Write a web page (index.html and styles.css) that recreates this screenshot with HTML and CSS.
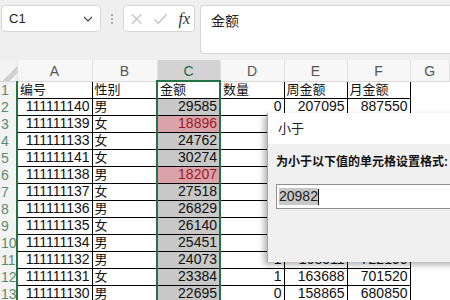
FILE: index.html
```html
<!DOCTYPE html>
<html lang="zh-CN">
<head>
    <meta charset="UTF-8">
    <title>条件格式 - 小于</title>
    <link rel="stylesheet" href="styles.css">
</head>
<body>
    <div class="toolbar">
        <div class="namebox">
            <span>C1</span>
            <svg class="chevron" width="10" height="6" viewBox="0 0 10 6"><path d="M1 1l4 4 4-4" fill="none" stroke="#444" stroke-width="1.2"/></svg>
        </div>
        <div class="dots">
            <svg width="4" height="12" viewBox="0 0 4 12"><circle cx="2" cy="2" r="1" fill="#999"/><circle cx="2" cy="6" r="1" fill="#999"/><circle cx="2" cy="10" r="1" fill="#999"/></svg>
        </div>
        <div class="fxbox">
            <svg width="14" height="14" viewBox="0 0 14 14"><path d="M2 2l10 10M12 2L2 12" stroke="#c4c4c4" stroke-width="1.3"/></svg>
            <svg width="16" height="14" viewBox="0 0 16 14"><path d="M1.5 7.5l4 4L14.5 2" fill="none" stroke="#c4c4c4" stroke-width="1.3"/></svg>
            <span class="fx">fx</span>
        </div>
        <div class="formula">金额</div>
    </div>

    <table class="sheet">
        <colgroup>
            <col class="w-rh"><col class="w-a"><col class="w-b"><col class="w-c"><col class="w-d"><col class="w-e"><col class="w-f"><col>
        </colgroup>
        <thead>
            <tr>
                <th class="corner"></th>
                <th>A</th><th>B</th><th class="sel-col">C</th><th>D</th><th>E</th><th>F</th><th>G</th>
            </tr>
        </thead>
        <tbody id="rows"></tbody>
    </table>

    <div class="dialog">
        <div class="dialog-title">小于</div>
        <div class="dialog-body">
            <div class="prompt">为小于以下值的单元格设置格式:</div>
            <div class="input"><span class="picked">20982</span><span class="caret"></span></div>
        </div>
    </div>

    <script>
        // rows: id, sex, amount, qty, week, month (blank where the dialog covers them)
        const data = [
            ['编号', '性别', '金额', '数量', '周金额', '月金额'],
            ['111111140', '男', '29585', '0', '207095', '887550'],
            ['111111139', '女', '18896', '', '', ''],
            ['111111133', '女', '24762', '', '', ''],
            ['111111141', '女', '30274', '', '', ''],
            ['111111138', '男', '18207', '', '', ''],
            ['111111137', '女', '27518', '', '', ''],
            ['111111136', '男', '26829', '', '', ''],
            ['111111135', '女', '26140', '', '', ''],
            ['111111134', '男', '25451', '', '', ''],
            ['111111132', '男', '24073', '1', '168511', '722190'],
            ['111111131', '女', '23384', '1', '163688', '701520'],
            ['111111130', '男', '22695', '0', '158865', '680850']
        ];
        const limit = 20982;
        const body = document.getElementById('rows');

        data.forEach((row, i) => {
            const tr = document.createElement('tr');
            let html = '<th class="rh">' + (i + 1) + '</th>';
            row.forEach((v, j) => {
                let cls = 'cell';
                if (i > 0 && j !== 1) cls += ' num';
                if (j === 2) {
                    cls += ' sel';
                    if (i > 0) cls += Number(v) < limit ? ' low' : ' grey';
                    if (i === 0) cls += ' sel-top';
                    if (i === data.length - 1) cls += ' sel-bottom';
                }
                html += '<td class="' + cls + '">' + v + '</td>';
            });
            html += '<td class="blank"></td>';
            tr.innerHTML = html;
            body.appendChild(tr);
        });
    </script>
</body>
</html>
```

FILE: styles.css
```css
body {
    margin: 0;
    width: 450px;
    height: 300px;
    overflow: hidden;
    position: relative;
    background: #fff;
    font-family: "Liberation Sans", "Noto Sans CJK SC", sans-serif;
    font-size: 13px;
    color: #111;
}

.toolbar {
    height: 60px;
    background: #efefef;
    display: flex;
    align-items: flex-start;
    padding: 5px 0 0 1px;
    box-sizing: border-box;
}
.namebox {
    width: 100px;
    height: 27px;
    background: #fff;
    border: 1px solid #d6d6d6;
    border-radius: 4px;
    box-sizing: border-box;
    display: flex;
    align-items: center;
    justify-content: space-between;
    padding: 0 7px 0 7px;
    font-size: 13px;
    color: #222;
}
.dots {
    width: 22px;
    height: 27px;
    display: flex;
    align-items: center;
    justify-content: center;
}
.fxbox {
    width: 72px;
    height: 27px;
    background: #fff;
    border: 1px solid #d6d6d6;
    border-radius: 4px;
    box-sizing: border-box;
    display: flex;
    align-items: center;
    gap: 10px;
    padding: 0 4px 0 6px;
}
.fx {
    font-family: "Liberation Serif", serif;
    font-style: italic;
    font-size: 16px;
    color: #333;
}
.formula {
    flex: 1;
    height: 49px;
    margin-left: 5px;
    background: #fff;
    border: 1px solid #d6d6d6;
    border-right: none;
    border-radius: 4px 0 0 4px;
    box-sizing: border-box;
    padding: 4px 10px;
    font-size: 14px;
    color: #222;
}

.sheet {
    border-collapse: collapse;
    table-layout: fixed;
    width: 450px;
}
.w-rh { width: 17px; }
.w-a { width: 75px; }
.w-b { width: 65px; }
.w-c { width: 63px; }
.w-d { width: 64px; }
.w-e { width: 63px; }
.w-f { width: 63px; }

.sheet thead th {
    height: 18px;
    padding: 2px 0 0;
    font-weight: normal;
    font-size: 14px;
    color: #555;
    background: #f7f7f7;
    border-right: 1px solid #e2e2e2;
    border-bottom: 1px solid #d8d8d8;
    text-align: center;
    line-height: 16px;
}
.sheet thead th.corner {
    background: #f3f3f3 linear-gradient(135deg, transparent 62%, #d0d0d0 63%, #d0d0d0 80%, transparent 81%);
}
.sheet thead th.sel-col {
    background: #d3d3d3;
    color: #1f6b42;
    border-bottom: 2px solid #217346;
}

.sheet tbody tr { height: 17px; }
.rh {
    padding: 0 0 0 1px;
    font-weight: normal;
    font-size: 14px;
    color: #5d8b70;
    background: #f3f3f3;
    text-align: left;
    border-right: 2px solid #217346;
    line-height: 16px;
}
.cell {
    padding: 0 2px;
    border: 1px solid #000;
    white-space: nowrap;
    overflow: hidden;
    line-height: 15px;
}
.cell.num {
    text-align: right;
    font-size: 14px;
}
.cell.grey { background: #c8c8c8; }
.cell.low {
    background: #d9a3a9;
    color: #9c1a26;
}
.cell.sel {
    border-left: 2px solid #217346;
    border-right: 2px solid #217346;
}
.cell.sel-top { border-top: 2px solid #217346; }
.cell.sel-bottom { border-bottom: 2px solid #217346; }
.blank { border: none; }

.dialog {
    position: absolute;
    left: 267px;
    top: 113px;
    width: 200px;
    height: 149px;
    background: #f0f0f0;
    border-left: 1px solid #a8a8a8;
    box-shadow: -3px 3px 6px rgba(0, 0, 0, 0.3);
}
.dialog-title {
    height: 31px;
    background: #fff;
    padding-left: 10px;
    line-height: 31px;
    font-size: 13px;
    color: #222;
}
.dialog-body {
    padding: 9px 0 0 8px;
}
.prompt {
    font-weight: bold;
    font-size: 12px;
    color: #111;
    height: 18px;
    line-height: 18px;
    white-space: nowrap;
}
.input {
    margin-top: 13px;
    height: 25px;
    background: #fff;
    border: 1px solid #8f8f8f;
    border-right: none;
    box-sizing: border-box;
    display: flex;
    align-items: center;
    padding-left: 2px;
    font-size: 14px;
}
.picked {
    background: #c8c8c8;
    color: #222;
    line-height: 17px;
}
.caret {
    width: 1px;
    height: 16px;
    background: #000;
}
```
